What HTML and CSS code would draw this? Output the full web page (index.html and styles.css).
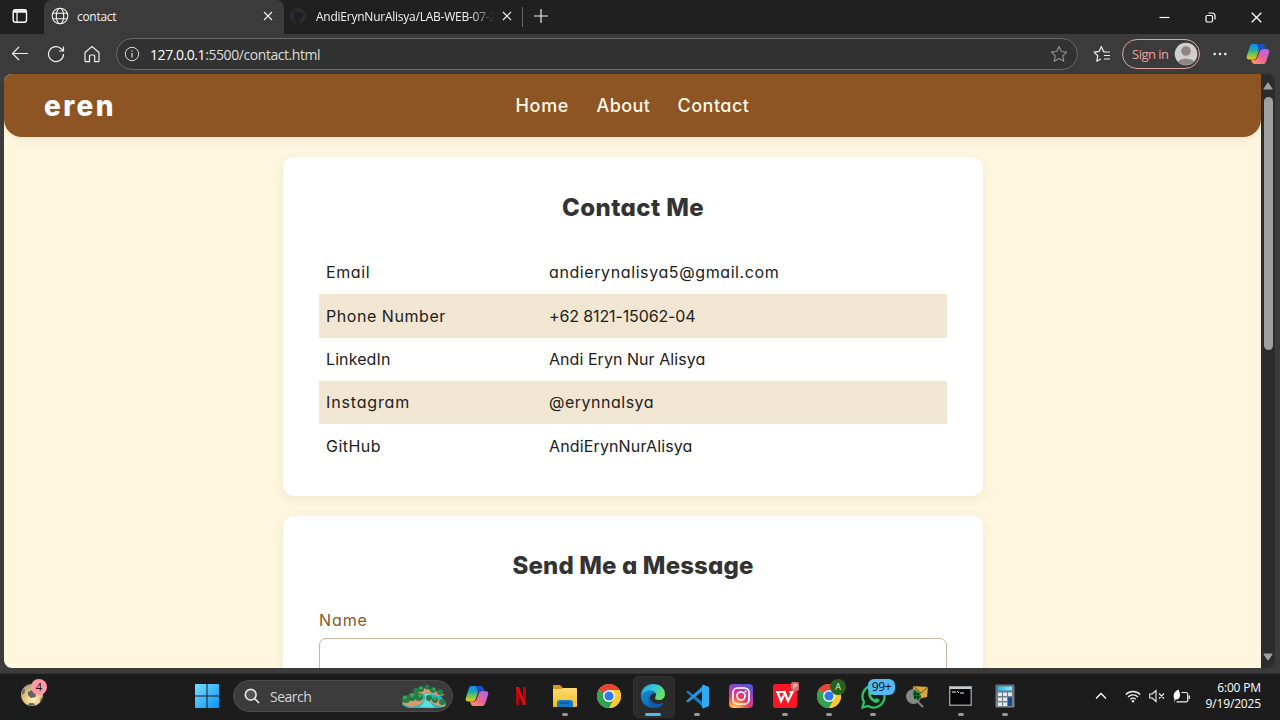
FILE: index.html
```html
<!DOCTYPE html>
<html lang="en">
<head>
<meta charset="utf-8">
<title>contact</title>
<link rel="stylesheet" href="styles.css">
</head>
<body>
<svg class="defs" width="0" height="0">
  <defs>
    <linearGradient id="winblue" x1="0" y1="0" x2="1" y2="1"><stop offset="0" stop-color="#7bdcff"/><stop offset="1" stop-color="#0795f5"/></linearGradient>
    <linearGradient id="coA" x1="0" y1="0" x2="0" y2="1"><stop offset="0" stop-color="#188ce8"/><stop offset=".35" stop-color="#16a6b8"/><stop offset=".65" stop-color="#73c34b"/><stop offset="1" stop-color="#f3c51c"/></linearGradient>
    <linearGradient id="coB" x1="1" y1="0" x2="0" y2="1"><stop offset="0" stop-color="#a563ee"/><stop offset=".5" stop-color="#ec619c"/><stop offset="1" stop-color="#ffa451"/></linearGradient>
    <linearGradient id="folder" x1="0" y1="0" x2="0" y2="1"><stop offset="0" stop-color="#ffdc72"/><stop offset="1" stop-color="#fabb1d"/></linearGradient>
    <linearGradient id="edgeG" x1="0" y1="0" x2="1" y2=".5"><stop offset="0" stop-color="#249bdf"/><stop offset=".5" stop-color="#31c7db"/><stop offset="1" stop-color="#69e15d"/></linearGradient>
    <linearGradient id="edgeB" x1="0" y1="0" x2="1" y2="1"><stop offset="0" stop-color="#168edb"/><stop offset="1" stop-color="#0c509c"/></linearGradient>
    <radialGradient id="insta" cx=".25" cy="1.05" r="1.1"><stop offset="0" stop-color="#ffdd55"/><stop offset=".25" stop-color="#ff8b3e"/><stop offset=".52" stop-color="#e83b67"/><stop offset=".77" stop-color="#b63ab4"/><stop offset="1" stop-color="#5359d9"/></radialGradient>
    <linearGradient id="calc" x1="0" y1="0" x2="0" y2="1"><stop offset="0" stop-color="#63717e"/><stop offset="1" stop-color="#7c8790"/></linearGradient>
    <linearGradient id="cyan" x1="0" y1="0" x2="1" y2="0"><stop offset="0" stop-color="#28bce8"/><stop offset="1" stop-color="#83edff"/></linearGradient>
    <radialGradient id="ball" cx=".55" cy=".7" r=".7"><stop offset="0" stop-color="#fff0c4"/><stop offset=".6" stop-color="#e2c078"/><stop offset="1" stop-color="#a59c88"/></radialGradient>
    <symbol id="copilot" viewBox="0 0 24 22">
      <path d="M6.500 1H15.500q2 0 2.600 2l.9 3H15.500q-2 0-2.600 2L10 16.500H3.500Q0 16.500 .8 13L4 3q.7-2 2.500-2z" fill="url(#coA)"/>
      <path d="M11 1h4.500q2 0 2.600 2l.9 3h-3.500q-2 0-2.700 2z" fill="#1a4fc4"/>
      <path d="M17.500 21H8.500q-2 0-2.600-2l-.9-2.500H8.500q2 0 2.600-2L13.500 8q.7-2 2.500-2H20.500Q24 6 23.200 9.500L20 19q-.7 2-2.500 2z" fill="url(#coB)"/>
      <path d="M8.500 16.500q2 0 2.600-2L13.500 8q.7-2 2.500-2" fill="none" stroke="#1c1c1c" stroke-opacity=".55" stroke-width="1"/>
    </symbol>
    <symbol id="chrome" viewBox="0 0 24 24">
      <circle cx="12" cy="12" r="12" fill="#ffca28"/>
      <path d="M12 12L1.600 6A12 12 0 0 1 22.400 6H12z" fill="#e94335"/>
      <path d="M1.600 6A12 12 0 0 0 12 24l5.200-9L12 12z" fill="#31a350"/>
      <path d="M22.400 6H12v6l5.200 3L12 24A12 12 0 0 0 22.400 6z" fill="#fdc92d"/>
      <circle cx="12" cy="12" r="6" fill="#fff"/><circle cx="12" cy="12" r="4.600" fill="#3079ec"/>
    </symbol>
  </defs>
</svg>

<div class="screen">
  <header class="tabbar">
    <div class="tab-menu"><svg width="16" height="16" viewBox="0 0 16 16" fill="none" stroke="#fff" stroke-width="1.400"><rect x="1.200" y="1.700" width="13.300" height="12.600" rx="2.300"/><path d="M5 4.500v9.500" stroke-width="1.200"/><path d="M2 3.500h12" stroke-width="2.400"/></svg></div>
    <div class="tab active">
      <svg width="18" height="18" viewBox="0 0 18 18" fill="none" stroke="#f2f2f2" stroke-width="1.100"><circle cx="9" cy="9" r="7.800"/><ellipse cx="9" cy="9" rx="3.700" ry="7.800"/><path d="M1.800 6.300h14.400M1.800 11.700h14.400"/></svg>
      <span class="tab-title t-contact">contact</span>
      <svg class="close" width="10" height="10" viewBox="0 0 10 10"><path d="M1 1l8 8M9 1L1 9" stroke="#eee" stroke-width="1.200"/></svg>
    </div>
    <div class="tab idle">
      <svg width="16" height="16" viewBox="0 0 16 16"><path fill="#292c30" d="M8 0a8 8 0 0 0-2.500 15.600c.4.100.5-.2.500-.4v-1.500c-2.200.5-2.700-1-2.700-1-.4-.9-.9-1.200-.9-1.200-.7-.5.100-.5.100-.5.800.100 1.200.8 1.200.8.700 1.300 1.900.9 2.300.7.100-.5.300-.9.500-1.100-1.800-.2-3.600-.9-3.600-4 0-.9.300-1.600.8-2.100-.1-.2-.4-1 .100-2.100 0 0 .7-.2 2.200.8a7.600 7.600 0 0 1 4 0c1.500-1 2.200-.8 2.200-.8.400 1.100.2 1.900.100 2.100.5.600.8 1.300.8 2.100 0 3.100-1.900 3.800-3.700 4 .3.300.6.800.6 1.500v2.200c0 .2.100.5.600.4A8 8 0 0 0 8 0z"/></svg>
      <span class="tab-title t-repo">AndiErynNurAlisya/LAB-WEB-07-2</span>
      <svg class="close" width="10" height="10" viewBox="0 0 10 10"><path d="M1 1l8 8M9 1L1 9" stroke="#eee" stroke-width="1.200"/></svg>
    </div>
    <i class="divider"></i>
    <svg class="plus" width="14" height="14" viewBox="0 0 14 14"><path d="M7 0v14M0 7h14" stroke="#eee" stroke-width="1.200"/></svg>
    <div class="win-controls">
      <svg width="11" height="11" viewBox="0 0 11 11"><path d="M.5 5.500h10" stroke="#fff" stroke-width="1.200"/></svg>
      <svg width="11" height="11" viewBox="0 0 11 11" fill="none" stroke="#fff" stroke-width="1.200"><rect x="1" y="3.500" width="6.500" height="6.500" rx="1.200"/><path d="M3.500 1h3.500a3 3 0 0 1 3 3v3.500"/></svg>
      <svg width="11" height="11" viewBox="0 0 11 11"><path d="M.7.7l9.600 9.600M10.300.7L.7 10.300" stroke="#fff" stroke-width="1.300"/></svg>
    </div>
  </header>

  <div class="toolbar">
    <svg class="nav-ic" width="18" height="18" viewBox="0 0 18 18" fill="none" stroke="#eee" stroke-width="1.200"><path d="M17 8.500H1.500M8 2L1.500 8.500 8 15"/></svg>
    <svg class="nav-ic" width="18" height="18" viewBox="0 0 18 18" fill="none" stroke="#eee" stroke-width="1.200"><path d="M16.500 9A7.500 7.500 0 1 1 14.500 4L16.300 6M16.500 1.500V6H12"/></svg>
    <svg class="nav-ic" width="18" height="18" viewBox="0 0 18 18" fill="none" stroke="#eee" stroke-width="1.200"><path d="M2 7.500L9 1.500l7 6V16q0 .7-.7.700h-3.600V11q0-1-1-1H7.500q-1 0-1 1v5.700H2.700Q2 16.700 2 16z" stroke-linejoin="round"/></svg>
    <div class="address">
      <svg width="16" height="16" viewBox="0 0 16 16" fill="none" stroke="#ddd"><circle cx="8" cy="8" r="6.700"/><path d="M8 7v4.500M8 4.400v1.300" stroke-width="1.200"/></svg>
      <span class="url"><b>127.0.0.1</b>:5500/contact.html</span>
      <svg class="star" width="18" height="18" viewBox="0 0 18 18" fill="none" stroke="#929292" stroke-width="1.100"><path stroke-linejoin="round" d="M9 1.500l2.300 5 5.400.6-4 3.700 1.100 5.400L9 13.500l-4.800 2.700 1.100-5.400-4-3.700 5.400-.6z"/></svg>
    </div>
    <svg class="fav" width="18" height="18" viewBox="0 0 18 18" fill="none" stroke="#eee" stroke-width="1.200"><path stroke-linejoin="round" d="M11.500 6.500h-1L8.300 1.500 6.100 6.400l-5 .7 3.700 3.600-1 5.500 4-2.300M10.500 7h6.500M11 10.500h6M11 14h6"/></svg>
    <div class="signin"><span>Sign in</span>
      <svg width="24" height="24" viewBox="0 0 24 24"><circle cx="12" cy="12" r="11.300" fill="#d1cfcd"/><circle cx="12" cy="9" r="4.800" fill="#8c8783"/><path d="M4 19.800c1.500-4.200 14.500-4.200 16 0a11.300 11.300 0 0 1-16 0z" fill="#8c8783"/></svg>
    </div>
    <svg class="dots" width="14" height="4" viewBox="0 0 14 4" fill="#eee"><circle cx="1.700" cy="2" r="1.300"/><circle cx="7" cy="2" r="1.300"/><circle cx="12.300" cy="2" r="1.300"/></svg>
    <svg class="cop" width="24" height="22"><use href="#copilot"/></svg>
  </div>

  <div class="view-row">
    <main class="page">
      <nav class="site-nav">
        <span class="brand">eren</span>
        <div class="links"><a class="l-home">Home</a><a class="l-about">About</a><a class="l-contact">Contact</a></div>
      </nav>
      <section class="card contact-card">
        <h2 class="h-contact">Contact Me</h2>
        <dl class="table">
          <div class="row"><dt class="k1">Email</dt><dd class="v1">andierynalisya5@gmail.com</dd></div>
          <div class="row"><dt class="k2">Phone Number</dt><dd class="v2">+62 8121-15062-04</dd></div>
          <div class="row"><dt class="k3">LinkedIn</dt><dd class="v3">Andi Eryn Nur Alisya</dd></div>
          <div class="row"><dt class="k4">Instagram</dt><dd class="v4">@erynnalsya</dd></div>
          <div class="row"><dt class="k5">GitHub</dt><dd class="v5">AndiErynNurAlisya</dd></div>
        </dl>
      </section>
      <section class="card form-card">
        <h2 class="h-send">Send Me a Message</h2>
        <label>Name</label>
        <div class="input"></div>
      </section>
    </main>
    <div class="scrollbar">
      <svg width="10" height="8" viewBox="0 0 10 8"><path d="M5 .8L9.200 7H.8z" fill="#a0a0a0" stroke="#a0a0a0" stroke-linejoin="round"/></svg>
      <i class="thumb"></i>
      <svg class="down" width="10" height="8" viewBox="0 0 10 8"><path d="M5 7.200L9.200 1H.8z" fill="#a0a0a0" stroke="#a0a0a0" stroke-linejoin="round"/></svg>
    </div>
  </div>

  <footer class="taskbar">
    <div class="widget">
      <svg width="24" height="24" viewBox="0 0 24 24"><circle cx="12" cy="12" r="11" fill="url(#ball)"/><path d="M8 9l4-2 4 2.500-.5 4.500-4.500 1-3-3zM1.500 12l1.500-5 2-1-.5 4zM8 22l1.500-2 4.500.3 1 2q-4 1-7-.3zM20 17l2.500-4q0 4-2.500 6z" fill="#656263"/></svg>
      <span class="badge">4</span>
    </div>
    <div class="cell start"><svg width="24" height="24" viewBox="0 0 24 24" fill="url(#winblue)"><path d="M1 0h10.500v11.500H0V1q0-1 1-1zM12.500 0H23q1 0 1 1v10.500H12.500zM0 12.500h11.500V24H1q-1 0-1-1zM12.500 12.500H24V23q0 1-1 1H12.500z"/></svg></div>
    <div class="search">
      <svg width="16" height="16" viewBox="0 0 16 16" fill="none" stroke="#e5e5e5" stroke-width="1.700"><circle cx="6.700" cy="6.700" r="5.400" fill="#555"/><path d="M10.700 10.700L15 15"/></svg>
      <span>Search</span>
      <svg class="island" width="47" height="25" viewBox="0 0 47 25"><path d="M1 20l10-9 10-6 13 1 10 11 1 4q-3 3-9 3H9Q3 23 1 20z" fill="#2cb7c2"/><path d="M18 23q9-6 5-14l7 1-3 6 7 8z" fill="#5bdbe2"/><path d="M4 21q-5-2-1-5l7-2 11 0 2 3-5 4-8 2zM25 16l4-2 9 2 7 6-4 1-9-3zM13 8l10-4 6 2 8 2 7 3-6 1-11-3-10 2z" fill="#d99a6e"/><g fill="#227d48"><circle cx="5" cy="15" r="4"/><circle cx="11" cy="13" r="4"/><circle cx="18" cy="13" r="4"/><circle cx="15" cy="7" r="3"/><circle cx="20" cy="5" r="3"/><circle cx="26" cy="3" r="2.500"/><circle cx="32" cy="6" r="3"/><circle cx="39" cy="8" r="3"/><circle cx="28" cy="14" r="3"/><circle cx="34" cy="16" r="3"/><circle cx="41" cy="18" r="3"/></g><g fill="#43a557"><circle cx="4" cy="13.500" r="1.800"/><circle cx="11" cy="11" r="2"/><circle cx="19" cy="11.500" r="1.800"/><circle cx="20" cy="4" r="1.500"/><circle cx="33" cy="5" r="1.500"/><circle cx="34" cy="14.500" r="1.500"/></g></svg>
    </div>
    <div class="apps">
      <div class="cell"><svg width="24" height="22"><use href="#copilot"/></svg></div>
      <div class="cell"><svg width="12" height="18" viewBox="0 0 12 18"><path d="M1 0h3v18H1zM8 0h3v18H8z" fill="#b20710"/><path d="M1 0h3l7 18H8z" fill="#e50914"/></svg></div>
      <div class="cell run"><svg width="26" height="24" viewBox="0 0 26 24"><path d="M1 1h7l3 3h13v5H1z" fill="#d89618"/><path d="M1 5h8l2-1h13q1 0 1 1v17q0 1-1 1H2q-1 0-1-1z" fill="url(#folder)"/><path d="M5 23v-4q0-3 3-3h10q3 0 3 3v4z" fill="#147bc4"/><path d="M8.500 19h9" stroke="#0b4c87" stroke-width="1.300"/></svg></div>
      <div class="cell"><svg width="24" height="24"><use href="#chrome"/></svg></div>
      <div class="cell run current"><svg width="26" height="26" viewBox="0 0 26 26"><path d="M1 13C1 6 6 1 13 1s12 4 12 10c0 4-3 6-6 6-3 0-4-1-4-2s1-1 1-3-2-4-5-4C6 8 3 10 1 13z" fill="url(#edgeG)"/><path d="M1 13c1-3 5-5.500 9-5.500 3 0 5 1 6 3-3-1-6 1-6 5 0 5 5 7 9 6l4-1c-2 3-6 4.500-10 4.500C6 25 1 20 1 13z" fill="url(#edgeB)"/><path d="M10 12c-3 4-1 10 4 13 4 0 7-1 9-4 1-1 0-1-1-.7-5 2-11-.3-12-5.300z" fill="#135da6"/></svg></div>
      <div class="cell run"><svg width="25" height="25" viewBox="0 0 25 25"><path d="M1 8l2-1.500L19 19v5z" fill="#167bc2"/><path d="M1 17l2 1.500L19 6V1z" fill="#2496df"/><path d="M18 .500l6 2.500v19l-6 2.500-1-1.500V2z" fill="#30aaf2"/></svg></div>
      <div class="cell"><svg width="24" height="24" viewBox="0 0 24 24"><rect width="24" height="24" rx="4" fill="url(#insta)"/><g fill="none" stroke="#fff" stroke-width="1.700"><rect x="4" y="4" width="16" height="16" rx="4.500"/><circle cx="12" cy="12" r="4"/></g><circle cx="16.600" cy="7.400" r="1.100" fill="#fff"/></svg></div>
      <div class="cell run"><svg width="24" height="24" viewBox="0 0 24 24"><rect width="24" height="24" rx="3" fill="#fb1824"/><path d="M3 8h10M4.500 8l3.500 9 4-8 3 8 4.500-9H16" fill="none" stroke="#fff" stroke-width="2.200"/></svg><span class="mini-badge">P</span></div>
      <div class="cell run"><svg width="24" height="24"><use href="#chrome"/></svg><span class="profile-badge">A</span></div>
      <div class="cell run"><svg width="25" height="25" viewBox="0 0 25 25"><path d="M1.500 23.500L3 18A11 11 0 1 1 7 22z" fill="none" stroke="#27c55f" stroke-width="2.300"/><path d="M8 7l2 0 1.200 3-1.200 1.500q1.500 3 4 4L15.500 14l3 1.500q-.5 3.500-4 3.500Q7 16 7 9z" fill="#27c55f"/></svg><span class="count-badge">99+</span></div>
      <div class="cell"><svg width="24" height="25" viewBox="0 0 24 25"><path d="M8 2l15 1-1 10-14 3z" fill="#d7a641"/><path d="M8 2l8 7 7-6" fill="none" stroke="#674c1b"/><circle cx="8.500" cy="12.500" r="7.500" fill="#858a86"/><path d="M8 6q7 1 8 6l-2 4-5-1z" fill="#168a26"/><path d="M10 7v8M13 9v7M8 10h7M9 13h7" stroke="#032c0a"/><path d="M13 18l5 5" stroke="#858585" stroke-width="2"/></svg></div>
      <div class="cell run term"><svg width="23" height="20" viewBox="0 0 23 20"><rect x=".7" y=".7" width="21.500" height="18.500" fill="#050505" stroke="#969ca0" stroke-width="1.400"/><path d="M1 2h21" stroke="#c7ced1" stroke-width="2"/><path d="M3 6h2M6 5v2M8 5l2 2M11 7h4" stroke="#eee"/></svg></div>
      <div class="cell run"><svg width="20" height="24" viewBox="0 0 20 24"><rect x=".5" y=".5" width="19" height="23" rx="1" fill="url(#calc)"/><rect x="3" y="2.500" width="14" height="4" fill="url(#cyan)"/><g fill="#e3e8ee"><rect x="3" y="8.500" width="4" height="3.500"/><rect x="8" y="8.500" width="4" height="3.500"/><rect x="13" y="8.500" width="4" height="3.500"/><rect x="3" y="13.500" width="4" height="3.500"/><rect x="8" y="13.500" width="4" height="3.500"/><rect x="3" y="18.500" width="4" height="3.500"/><rect x="8" y="18.500" width="4" height="3.500"/></g><rect x="13" y="13.500" width="4" height="8.500" fill="#164a91"/></svg></div>
    </div>
    <div class="tray">
      <svg width="12" height="8" viewBox="0 0 12 8"><path d="M1 6.500l5-5 5 5" fill="none" stroke="#fff" stroke-width="1.300"/></svg>
      <svg class="wifi" width="16" height="13" viewBox="0 0 16 13" fill="none" stroke="#eee" stroke-width="1.300"><path d="M.8 4.500a10.200 10.200 0 0 1 14.400 0M3 7a7 7 0 0 1 10 0M5.200 9.400a4 4 0 0 1 5.600 0"/><circle cx="8" cy="11.200" r="1.200" fill="#fff" stroke="none"/></svg>
      <svg class="vol" width="16" height="14" viewBox="0 0 16 14" fill="none" stroke="#eee" stroke-width="1.100"><path d="M.7 5h2.500L7 1.500v11L3.200 9H.7zM10 4.500l5 5M15 4.500l-5 5"/></svg>
      <svg class="bat" width="18" height="15" viewBox="0 0 18 15" fill="none" stroke="#eee" stroke-width="1.200"><path d="M8.500 3.500H13q1.700 0 1.700 1.700v6q0 1.700-1.700 1.700H3.500M16.300 6.500v3.500"/><path d="M1.500 10.500Q-1.500 4 5.500 .500q2.500 5 1 8Q5 11 2.800 10.300L1 13.500z" fill="#fff" stroke="none"/></svg>
      <div class="clock"><span class="time">6:00 PM</span><span class="date">9/19/2025</span></div>
    </div>
  </footer>
</div>
</body>
</html>
```
FILE: styles.css
```css
* { box-sizing: border-box; }
body { margin: 0; background: #1c1c1c; overflow: hidden; font-family: "Open Sans", "Noto Sans", sans-serif; }
svg { display: block; flex: none; }
.defs { position: absolute; }
.screen { width: 1280px; height: 720px; display: flex; flex-direction: column; background: #3b3b3b; overflow: hidden; }

/* Tabs */
.tabbar { height: 34px; flex: none; display: flex; align-items: center; background: #202020; color: #f0f0f0; font-size: 12px; }
.tab-menu { width: 44px; height: 34px; padding: 8px 0 0 12px; }
.tab { height: 34px; display: flex; align-items: center; }
.tab .close { margin-left: auto; }
.active { width: 240px; padding: 0 11px 2px 7px; gap: 8px; background: #3b3b3b; border-radius: 8px 8px 0 0; }
.idle { width: 238px; padding: 0 10px 2px 6px; }
.tab-title { white-space: nowrap; }
.t-contact { letter-spacing: -.3px; }
.t-repo { width: 179px; min-width: 0; margin-left: 10px; letter-spacing: -.24px; -webkit-mask-image: linear-gradient(90deg, #000 155px, transparent 179px); mask-image: linear-gradient(90deg, #000 155px, transparent 179px); }
.divider { width: 1px; height: 20px; background: #686868; }
.plus { margin: 0 0 2px 11px; }
.win-controls { display: flex; gap: 35px; margin-left: auto; padding-right: 18px; }

/* Toolbar */
.toolbar { height: 40px; flex: none; display: flex; align-items: center; padding-left: 11px; }
.nav-ic { margin-right: 18px; }
.address { width: 962px; height: 32px; margin-left: -3px; padding: 0 9px 0 7px; display: flex; align-items: center; border: 1px solid #696969; border-radius: 16px; background: #323232; }
.url { margin-left: 10px; color: #dcdcdc; font-size: 14px; letter-spacing: -.43px; white-space: nowrap; }
.url b { font-weight: 400; color: #fff; }
.star { margin-left: auto; }
.fav { margin-left: 15px; }
.signin { width: 78px; height: 30px; margin-left: 11px; padding: 0 1px 0 9px; border: 1px solid #e2a5a5; border-radius: 15px; display: flex; align-items: center; justify-content: space-between; color: #e2a5a5; font-size: 13px; letter-spacing: -.5px; white-space: nowrap; }
.dots { margin-left: 13px; }
.cop { margin-left: 19px; }

/* Page viewport */
.view-row { height: 594px; flex: none; display: flex; padding-left: 4px; }
.page { width: 1257px; height: 594px; overflow: hidden; background: #fef6df; border-radius: 8px 0 0 8px; font-family: Inter, "Open Sans", sans-serif; font-feature-settings: "cv11"; color: #212121; }
.site-nav { height: 63px; display: grid; grid-template-columns: 1fr auto 1fr; align-items: center; padding: 0 40px; background: #8c5523; border-radius: 0 0 18px 18px; box-shadow: 0 2px 9px rgba(90,60,20,.09); color: #fff8e8; }
.brand { font-size: 28px; font-weight: 800; letter-spacing: 2.400px; color: #fff; }
.links { display: flex; gap: 28px; font-size: 18px; white-space: nowrap; }
.links a { width: 53px; font-weight: 450; }
.links .l-home { letter-spacing: .7px; }
.links .l-about { letter-spacing: .4px; }
.links .l-contact { width: 72px; letter-spacing: .5px; }
.card { width: 700px; margin: 20px auto 0; padding: 36px; background: #fff; border-radius: 11px; box-shadow: 0 3px 11px rgba(100,75,20,.09); position: relative; left: .5px; }
.contact-card { height: 338.500px; }
.form-card { height: 400px; }
h2 { height: 30px; margin: 0; text-align: center; line-height: 29px; font-size: 24px; font-weight: 800; color: #333; white-space: nowrap; }
.h-contact { letter-spacing: .42px; }
.h-send { letter-spacing: .15px; line-height: 28px; }
.table { margin: 28px 0 0; }
.row { height: 43.350px; display: grid; grid-template-columns: 223px 1fr; align-items: center; padding: 0 7px 1px; font-size: 16px; white-space: nowrap; }
.row:nth-child(even) { background: #f0e6d2; }
dt, dd { margin: 0; }
.k1 { letter-spacing: .6px; }
.k2 { letter-spacing: .55px; }
.k3 { letter-spacing: .1px; }
.k4 { letter-spacing: .85px; }
.k5 { letter-spacing: .45px; }
.v1 { letter-spacing: .6px; }
.v2 { letter-spacing: -.12px; }
.v3 { letter-spacing: .05px; }
.v4 { letter-spacing: .5px; }
.v5 { letter-spacing: .14px; }
label { display: block; height: 24px; margin-top: 26px; line-height: 24px; color: #8c5523; font-size: 16px; letter-spacing: .9px; }
.input { height: 44px; margin-top: 6px; border: 1.500px solid #cbb89f; border-radius: 7px; }
.scrollbar { width: 14px; display: flex; flex-direction: column; align-items: center; padding: 8px 0 7px; background: #2c2c2c; border-radius: 0 8px 8px 0; }
.thumb { width: 9px; height: 253px; margin-top: 7px; border-radius: 5px; background: #9f9f9f; }
.down { margin-top: auto; }

/* Taskbar */
.taskbar { height: 47px; flex: none; margin-top: 5px; display: flex; background: #1c1c1c; border-top: 1px solid #303030; }
.widget { width: 185px; padding: 9px 0 0 20px; position: relative; }
.badge { position: absolute; left: 31px; top: 5px; width: 16px; height: 16px; border-radius: 8px; background: #ff99a4; color: #111; font-size: 11px; line-height: 16px; text-align: center; }
.cell { width: 44px; height: 46px; flex: none; display: flex; align-items: center; justify-content: center; position: relative; padding-bottom: 2px; }
.term { padding-right: 2px; }
.search { width: 220px; height: 32px; margin: 6px 2px 0 4px; border: 1px solid #4b4b4b; border-radius: 16px; background: #3b3b3b; display: flex; align-items: center; padding: 0 4px 0 10px; color: #d5d5d5; font-size: 14px; letter-spacing: -.5px; }
.search span { margin-left: 10px; }
.island { margin-left: auto; }
.apps { display: flex; }
.run::after { content: ""; position: absolute; bottom: 4px; left: 19px; width: 6px; height: 3px; border-radius: 2px; background: #9b9894; }
.current::before { content: ""; position: absolute; left: 2px; top: 2px; width: 40px; height: 40px; border-radius: 5px; background: #2b2b2b; border: 1px solid #333; }
.current svg { position: relative; }
.current::after { left: 14px; width: 16px; background: #55b9ec; }
.mini-badge { position: absolute; left: 28px; top: 8px; width: 8px; height: 9px; border-radius: 2px; background: #df6670; color: #fff; font-size: 7px; line-height: 9px; text-align: center; }
.profile-badge { position: absolute; left: 23px; top: 5px; width: 16px; height: 16px; border-radius: 8px; background: #28611e; color: #dcf5c5; font-size: 9px; line-height: 16px; text-align: center; }
.count-badge { position: absolute; left: 17px; top: 5px; width: 27px; height: 16px; border-radius: 6px; background: #52baf6; color: #111; font-size: 12px; line-height: 16px; text-align: center; letter-spacing: -.3px; }
.tray { flex: 1; display: flex; align-items: center; padding: 0 19px 2px 68px; }
.wifi { margin-left: 18px; }
.vol { margin-left: 8px; }
.bat { margin-left: 8px; }
.clock { margin-left: auto; text-align: right; display: flex; flex-direction: column; color: #fff; font-size: 12px; line-height: 16px; letter-spacing: -.15px; white-space: nowrap; }
```
